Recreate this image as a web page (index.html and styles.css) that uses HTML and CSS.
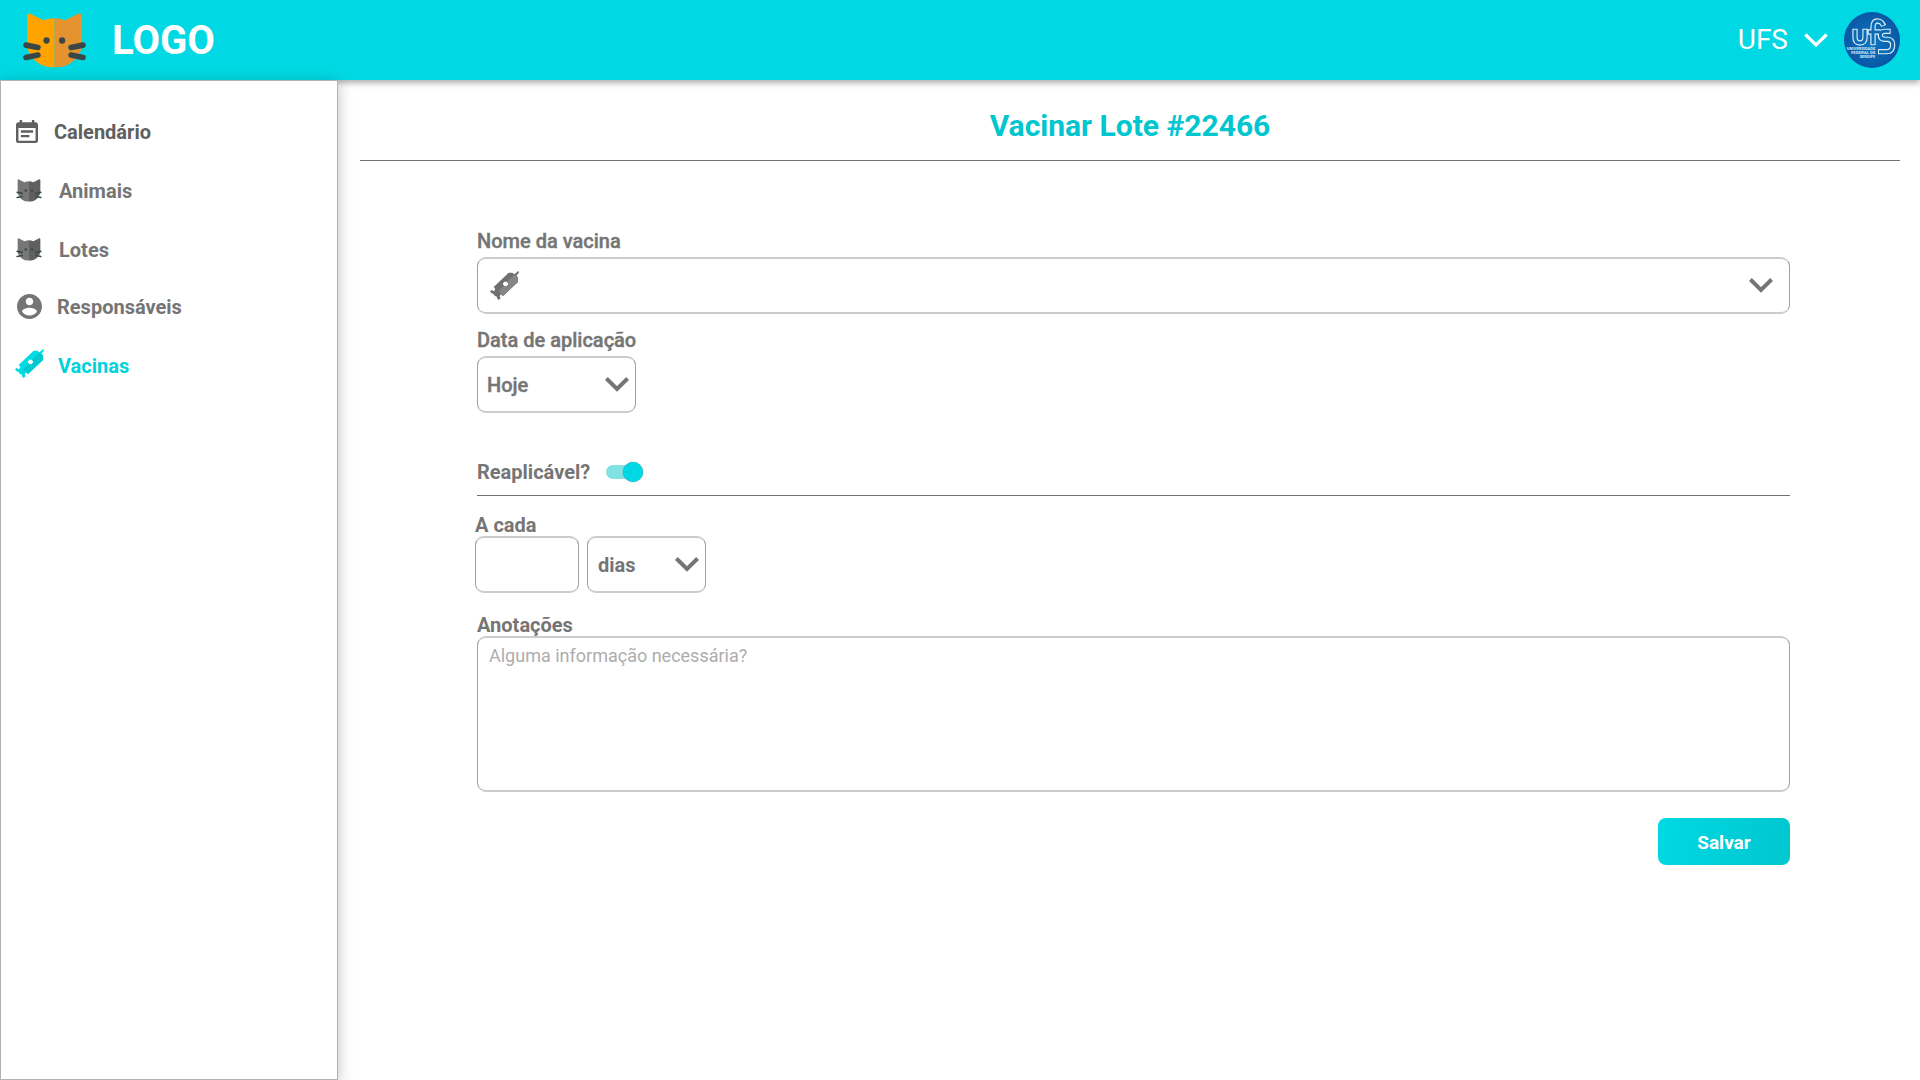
FILE: index.html
```html
<!DOCTYPE html>
<html lang="pt-BR">
<head>
<meta charset="utf-8">
<title>Vacinar Lote</title>
<link rel="stylesheet" href="styles.css">
</head>
<body>
<svg class="sprite" width="0" height="0" aria-hidden="true">
  <symbol id="cat" viewBox="70 38 190 166">
    <path class="cat-left" d="M82 47Q82 38 92 40L132 60Q148 54 165 54V202Q128 202 106 181Q82 158 82 132Z"/>
    <path class="cat-right" d="M248 47Q248 38 236 40L197 60Q181 54 165 54V202Q202 202 224 181Q248 158 248 132Z"/>
    <g class="cat-face"><circle cx="141" cy="121" r="9.5"/><circle cx="188" cy="121" r="9.5"/></g>
    <path class="cat-whiskers" d="M79 135L115 142M79 172L115 165M251 135L215 142M251 172L215 165"/>
  </symbol>
  <symbol id="syringe" viewBox="0 0 87 87">
    <path class="syr-light" d="M84 0L87 3L84 9L79 14L84 19V33L39 75L33 70L29 76L32 81L26 87L21 82V77L15 75L10 69L5 67L0 61L5 57L12 61L16 54L11 48L56 5H67L73 10L79 5Z"/>
    <path class="syr-dark" d="M84 19V33L39 75L25 60L71 12L79 14Z"/>
    <path class="syr-cross" d="M42 32H51V45H42Z M39 35H54V42H39Z"/>
  </symbol>
  <symbol id="chevron" viewBox="0 0 24 15"><path d="M1.4 1.5L12 12L22.6 1.5"/></symbol>
</svg>

<header class="topbar">
  <svg class="logo-cat cat"><use href="#cat"/></svg>
  <h1 class="logo">LOGO</h1>
  <div class="account">
    <span class="account-name">UFS</span>
    <svg class="account-chevron"><use href="#chevron"/></svg>
    <svg class="avatar" viewBox="432 36 168 168">
      <defs><radialGradient id="av"><stop offset="0" stop-color="#0d78c2"/><stop offset="1" stop-color="#0957a4"/></radialGradient></defs>
      <circle cx="516" cy="120" r="84" fill="url(#av)"/>
      <g class="avatar-mark">
        <path class="outer" d="M465 86V112Q465 129 480 129Q495 129 495 112V86M519 136V82Q519 63 532 63Q545 63 551 78M503 96H541M572 94H554Q541 94 541 106Q541 117 553 118H563Q578 119 578 134Q578 155 560 155H534"/>
        <path class="inner" d="M465 89V112Q465 129 480 129Q495 129 495 112V89M519 133V82Q519 63 532 63Q545 63 549 76M506 96H541M569 94H554Q541 94 541 106Q541 117 553 118H563Q578 119 578 134Q578 155 560 155H537"/>
      </g>
      <g class="avatar-text">
        <text x="440" y="150" textLength="86" lengthAdjust="spacingAndGlyphs">UNIVERSIDADE</text>
        <text x="453" y="162" textLength="73" lengthAdjust="spacingAndGlyphs">FEDERAL DE</text>
        <text x="479" y="174" textLength="47" lengthAdjust="spacingAndGlyphs">SERGIPE</text>
      </g>
    </svg>
  </div>
</header>

<div class="layout">
  <nav class="sidebar">
    <a class="item item-calendar">
      <svg class="ico-calendar" viewBox="3 1 18 20" preserveAspectRatio="none"><path d="M17 10H7v2h10v-2zm2-7h-1V1h-2v2H8V1H6v2H5c-1.110 0-2 .9-2 2v14c0 1.100.89 2 2 2h14c1.100 0 2-.9 2-2V5c0-1.100-.9-2-2-2zm0 16H5V8h14v11zm-5-5H7v2h7v-2z"/></svg>
      <span>Calendário</span></a>
    <a class="item item-animals"><svg class="ico-cat cat"><use href="#cat"/></svg><span>Animais</span></a>
    <a class="item item-lots"><svg class="ico-cat cat"><use href="#cat"/></svg><span>Lotes</span></a>
    <a class="item item-people">
      <svg class="ico-person" viewBox="2 2 20 20"><path d="M12 2C6.480 2 2 6.480 2 12s4.480 10 10 10 10-4.480 10-10S17.520 2 12 2zm0 3c1.660 0 3 1.340 3 3s-1.340 3-3 3-3-1.340-3-3 1.340-3 3-3zm0 14.200c-2.500 0-4.710-1.280-6-3.220.03-1.990 4-3.080 6-3.080 1.990 0 5.970 1.090 6 3.080-1.290 1.940-3.500 3.220-6 3.220z"/></svg>
      <span>Responsáveis</span></a>
    <a class="item item-vaccines active"><svg class="ico-syringe"><use href="#syringe"/></svg><span>Vacinas</span></a>
  </nav>

  <main class="content">
    <h2 class="title">Vacinar Lote #22466</h2>
    <form class="form">
      <label class="label soft">Nome da vacina</label>
      <div class="box select-name"><svg class="ico-syringe"><use href="#syringe"/></svg><svg class="chevron"><use href="#chevron"/></svg></div>
      <label class="label soft label-date">Data de aplicação</label>
      <div class="box select-date"><span class="soft">Hoje</span><svg class="chevron"><use href="#chevron"/></svg></div>
      <div class="repeat"><span>Reaplicável?</span><span class="switch"><span class="knob"></span></span></div>
      <div class="every">
        <label class="label label-every">A cada</label>
        <div class="every-row">
          <div class="box amount"></div>
          <div class="box unit"><span>dias</span><svg class="chevron"><use href="#chevron"/></svg></div>
        </div>
      </div>
      <label class="label label-notes">Anotações</label>
      <div class="box notes">Alguma informação necessária?</div>
      <button class="save" type="button">Salvar</button>
    </form>
  </main>
</div>
</body>
</html>
```
FILE: styles.css
```css
* { box-sizing: border-box; }
body { margin: 0; width: 1920px; height: 1080px; overflow: hidden; background: #fff; font: 700 20px/24px Roboto, sans-serif; color: #757575; display: flex; flex-direction: column; }
svg { display: block; flex: none; }
.sprite { display: none; }
h1, h2 { margin: 0; }

.topbar { height: 80px; flex: none; display: flex; align-items: center; padding: 0 20px 0 23px; background: #00d9e3; box-shadow: 0 3px 6px rgba(0,0,0,.32); color: #fff; }
.logo-cat { width: 63px; height: 55px; }
.logo { margin-left: 26px; padding-top: 2px; font-size: 40px; line-height: 48px; font-weight: 700; }
.account { margin-left: auto; display: flex; align-items: center; }
.account-name { font-size: 28px; line-height: 32px; font-weight: 400; }
.account-chevron { width: 24px; height: 15px; margin: 0 16px 0 16px; fill: none; stroke: #fff; stroke-width: 3.2; }
.avatar { width: 56px; height: 56px; }
.avatar-mark { fill: none; }
.outer { stroke: #dcecf7; stroke-width: 16; }
.inner { stroke: #0b6cb6; stroke-width: 9; }
.avatar-text { font: 700 11.500px Roboto, sans-serif; fill: #d5e8f5; }

.cat { --left: #ffa300; --right: #e5932f; --dark: #3a4747; --whisker: 17; }
.ico-cat { --left: #777; --right: #606060; --dark: #3a4a4b; --whisker: 12; width: 26px; height: 23px; margin: -2px 1px 0 0; }
.cat-left { fill: var(--left); }
.cat-right { fill: var(--right); }
.cat-face { fill: var(--dark); }
.cat-whiskers { stroke: var(--dark); stroke-width: var(--whisker); stroke-linecap: round; }

.layout { flex: 1; display: flex; }
.sidebar { width: 338px; flex: none; border: 1px solid #b2b2b2; background: #fff; box-shadow: 0 3px 14px rgba(0,0,0,.25); padding: 39px 0 0 15px; display: flex; flex-direction: column; }
.item { display: flex; align-items: center; height: 24px; }
.item-calendar { color: #606060; gap: 16px; }
.item-animals, .item-lots { margin-top: 35px; gap: 16px; }
.item-people { margin-top: 33px; gap: 15px; }
.item-vaccines { margin-top: 35px; gap: 13px; }
.ico-calendar { width: 22px; height: 23px; margin-top: -1px; fill: currentColor; }
.ico-person { width: 25px; height: 25px; margin: -2px 0 0 1px; fill: currentColor; }
.active { color: #00d3dc; }
.ico-syringe { width: 29px; height: 29px; --l: #707070; --d: #858585; }
.active .ico-syringe { --l: #00dbe4; --d: #00c9d2; margin: -5px 1px 0 -1px; }
.syr-light { fill: var(--l); }
.syr-dark { fill: var(--d); }
.syr-cross { fill: #fff; }

.content { flex: 1; padding: 28px 20px 0 22px; }
.title { height: 53px; border-bottom: 1px solid #707070; font-size: 30px; line-height: 36px; font-weight: 700; color: #00c6cf; text-align: center; }
.form { width: 1313px; margin: 68px 0 0 117px; display: flex; flex-direction: column; align-items: flex-start; }
.label { display: block; }
.soft { font-weight: 500; -webkit-text-stroke: .4px currentColor; }
.box { display: flex; align-items: center; height: 57px; border: solid; border-width: 2px 1px; border-color: #ccc #a0a0a0; border-radius: 9px; background: #fff; }
.chevron { width: 24px; height: 15px; margin-left: auto; fill: none; stroke: #757575; stroke-width: 4; }
.select-name { width: 1313px; margin-top: 4px; padding: 0 16px 0 12px; }
.label-date { margin-top: 14px; }
.select-date { width: 159px; margin-top: 4px; padding: 0 6px 0 9px; }
.repeat { width: 1313px; height: 36px; margin-top: 47px; border-bottom: 1px solid #707070; display: flex; align-items: flex-start; gap: 16px; }
.switch { width: 37px; height: 14px; margin-top: 5px; border-radius: 7px; background: #80e2e4; display: flex; align-items: center; justify-content: flex-end; }
.knob { width: 20px; height: 20px; flex: none; border-radius: 50%; background: #00d9e3; box-shadow: 0 0 1px #567; }
.every { margin: 17px 0 0 -2px; }
.every-row { display: flex; gap: 8px; margin-top: -1px; }
.amount { width: 104px; }
.unit { width: 119px; padding: 0 6px 0 10px; }
.label-notes { margin-top: 20px; }
.notes { width: 1313px; height: 156px; margin-top: -1px; align-items: flex-start; padding: 6px 11px; font-size: 18px; font-weight: 400; color: #adadad; }
.save { align-self: flex-end; width: 132px; height: 47px; margin-top: 26px; padding: 2px 0 0; border: 0; border-radius: 8px; background: linear-gradient(100deg, #00d9e3, #00c6cf); color: #fff; font: 700 19px/24px Roboto, sans-serif; }
```
